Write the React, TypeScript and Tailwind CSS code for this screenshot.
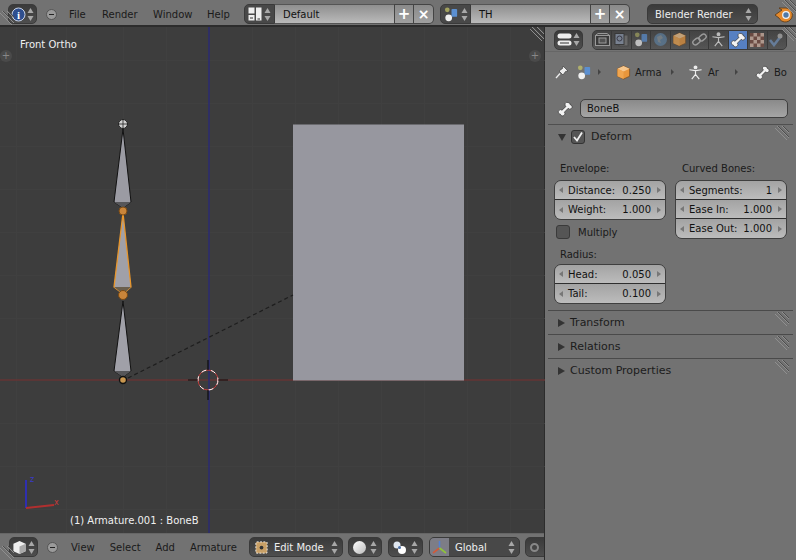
import type { ReactNode } from 'react';

const ui = "font-['DejaVu_Sans','Liberation_Sans',sans-serif]";

function Updown({ light = true }: { light?: boolean }) {
  const c = light ? '#a8a8a8' : '#999';
  return (
    <svg width="7" height="15" viewBox="0 0 7 15" className="shrink-0">
      <path d="M3.5 1 L6.5 6 H0.5 Z" fill={c} />
      <path d="M3.5 14 L6.5 9 H0.5 Z" fill={c} />
    </svg>
  );
}

function Corner({ className }: { className: string }) {
  return (
    <svg width="14" height="14" viewBox="0 0 14 14" className={className}>
      <path d="M2 0 L14 12 M7 0 L14 7 M0 2 L12 14" stroke="#8f8f8f" strokeWidth="1" fill="none" />
      <path d="M3 0 L14 11 M8 0 L14 6" stroke="#4d4d4d" strokeWidth="1" fill="none" />
    </svg>
  );
}

function DarkBtn({ children, className = '' }: { children: ReactNode; className?: string }) {
  return (
    <div className={`flex h-[20px] shrink-0 items-center rounded-[5px] border border-[#3a3a3a] bg-gradient-to-b from-[#3a3a3a] to-[#4e4e4e] ${className}`}>
      {children}
    </div>
  );
}

function InfoIcon() {
  return (
    <svg width="15" height="15" viewBox="0 0 15 15">
      <circle cx="7.5" cy="7.5" r="6.5" fill="#2f4f8f" stroke="#c9d4e8" strokeWidth="1" />
      <text x="7.5" y="11.5" textAnchor="middle" fontSize="11" fontWeight="700" fontFamily="Liberation Serif" fill="#ffffff">i</text>
    </svg>
  );
}

function Minus() {
  return (
    <div className="flex h-[11px] w-[11px] shrink-0 items-center justify-center rounded-full bg-[#9a9a9a] border border-[#555]">
      <div className="h-[1px] w-[5px] bg-[#222]" />
    </div>
  );
}

function LayoutIcon() {
  return (
    <svg width="14" height="14" viewBox="0 0 14 14">
      <rect x="0.5" y="0.5" width="6" height="6" fill="#eee" />
      <rect x="0.5" y="8" width="6" height="5.5" fill="#eee" />
      <rect x="8" y="0.5" width="5.5" height="13" fill="#eee" />
      <path d="M2 11 H5 M9.5 12 H12" stroke="#333" />
    </svg>
  );
}

function SceneIcon({ size = 16 }: { size?: number }) {
  return (
    <svg width={size} height={size} viewBox="0 0 16 16">
      <circle cx="3.5" cy="3" r="2.5" fill="#c9c96a" opacity="0.7" />
      <rect x="8" y="2" width="6" height="8.5" rx="1" fill="#5b8fd0" />
      <circle cx="5" cy="11.5" r="3.6" fill="#f0f0f0" />
    </svg>
  );
}

function BoneIcon({ size = 15, fill = '#f2f2f2' }: { size?: number; fill?: string }) {
  return (
    <svg width={size} height={size} viewBox="0 0 16 16">
      <path
        d="M11 1.5 a2.2 2.2 0 0 1 2.2 2.2 a2.2 2.2 0 0 1 1.2 3.8 a2.2 2.2 0 0 1 -3.2 -.2 L7.4 11.2 a2.2 2.2 0 0 1 -.4 3.2 a2.2 2.2 0 0 1 -3.6 -1.2 a2.2 2.2 0 0 1 -1.6 -3.6 a2.2 2.2 0 0 1 3.2 -.4 L9 5.4 a2.2 2.2 0 0 1 2 -3.9 Z"
        fill={fill}
        stroke="#333"
        strokeWidth="0.7"
      />
    </svg>
  );
}

function CubeIcon({ size = 15 }: { size?: number }) {
  return (
    <svg width={size} height={size} viewBox="0 0 16 16">
      <path d="M8 1 L14.5 4 V12 L8 15 L1.5 12 V4 Z" fill="#e8963c" stroke="#7a4a18" strokeWidth="0.7" />
      <path d="M8 1 L14.5 4 L8 7 L1.5 4 Z" fill="#f6c78e" />
      <path d="M8 7 V15 L1.5 12 V4 Z" fill="#f0a54f" />
    </svg>
  );
}

function ArmatureIcon({ size = 15 }: { size?: number }) {
  return (
    <svg width={size} height={size} viewBox="0 0 16 16" fill="none" stroke="#eee" strokeWidth="1.2">
      <circle cx="8" cy="2.5" r="1.5" fill="#eee" />
      <path d="M1.5 5 L8 6 L14.5 5 M8 6 V10 M8 10 L4 15 M8 10 L12 15" />
    </svg>
  );
}

function PropertyTabs() {
  const tabs: ReactNode[] = [
    <svg key="cam" width="15" height="13" viewBox="0 0 15 13"><rect x="0.5" y="2.5" width="14" height="10" fill="#333" stroke="#bbb" /><path d="M1 2 L3 0.5 H12 L14 2" stroke="#bbb" fill="none" /><rect x="4" y="5" width="7" height="5" fill="#555" stroke="#bbb" /></svg>,
    <svg key="layers" width="15" height="14" viewBox="0 0 15 14"><rect x="5" y="2" width="9" height="11" fill="#777" stroke="#444" /><rect x="1" y="0.5" width="9" height="11" fill="#8a98ad" stroke="#333" /><circle cx="5.5" cy="5.5" r="2.5" fill="none" stroke="#334" /></svg>,
    <SceneIcon key="scene" size={15} />,
    <svg key="world" width="15" height="15" viewBox="0 0 15 15"><circle cx="7.5" cy="7.5" r="6.5" fill="#5d7f9e" /><path d="M4 5 L8 3 L10 6 L7 8 L8 11 L5 10 Z" fill="#86929a" /></svg>,
    <CubeIcon key="cube" size={15} />,
    <svg key="link" width="15" height="15" viewBox="0 0 15 15" fill="none" stroke="#bbb" strokeWidth="1.4"><rect x="0.5" y="7" width="8" height="5" rx="2.5" transform="rotate(-40 4.5 9.5)" /><rect x="6.5" y="3" width="8" height="5" rx="2.5" transform="rotate(-40 10.5 5.5)" /></svg>,
    <ArmatureIcon key="arm" size={15} />,
    <BoneIcon key="bone" size={16} />,
    <svg key="tex" width="14" height="14" viewBox="0 0 14 14"><rect width="14" height="14" fill="#d8b8a8" /><path d="M0 0h3.5v3.5H0z M7 0h3.5v3.5H7z M3.5 3.5H7V7H3.5z M10.5 3.5H14V7h-3.5z M0 7h3.5v3.5H0z M7 7h3.5v3.5H7z M3.5 10.5H7V14H3.5z M10.5 10.5H14V14h-3.5z" fill="#7a4c40" /></svg>,
    <svg key="check" width="15" height="14" viewBox="0 0 15 14"><path d="M1 7 L5 12 L12 3" stroke="#6f8fb8" strokeWidth="2.6" fill="none" /><circle cx="11" cy="3" r="2.5" fill="#b0b0b0" /></svg>,
  ];
  return (
    <div className="flex h-[20px] w-[195px] overflow-hidden rounded-[5px] border border-[#3a3a3a] bg-[#4a4a4a]">
      {tabs.map((t, i) => (
        <div key={i} className={`flex h-full flex-1 items-center justify-center border-r border-[#393939] last:border-r-0 ${i === 7 ? 'bg-[#5680c2]' : 'bg-gradient-to-b from-[#444] to-[#565656]'}`}>
          <div className={`flex ${i === 7 ? '' : 'opacity-70'}`}>{t}</div>
        </div>
      ))}
    </div>
  );
}

function NumRow({ label, value, last }: { label: string; value: string; last?: boolean }) {
  return (
    <div className={`flex h-[19px] items-center bg-gradient-to-b from-[#a3a3a3] to-[#bcbcbc] px-[4px] text-[10px] text-[#111] ${last ? '' : 'border-b border-[#2e2e2e]'}`}>
      <span className="mr-[5px] h-0 w-0 border-y-[3px] border-r-[4px] border-y-transparent border-r-[#777]" />
      <span>{label}</span>
      <span className="ml-auto">{value}</span>
      <span className="ml-[6px] h-0 w-0 border-y-[3px] border-l-[4px] border-y-transparent border-l-[#777]" />
    </div>
  );
}

function NumBox({ rows, className = '' }: { rows: [string, string][]; className?: string }) {
  return (
    <div className={`overflow-hidden rounded-[7px] border border-[#3f3f3f] ${className}`}>
      {rows.map(([l, v], i) => <NumRow key={l} label={l} value={v} last={i === rows.length - 1} />)}
    </div>
  );
}

function PanelHeader({ title }: { title: string }) {
  return (
    <div className="relative flex h-[24px] items-center border-t border-t-[#4a4a4a] pl-[10px] pt-[1px] text-[11px] text-[#1c1c1c]">
      <span className="mr-[5px] h-0 w-0 border-y-[4px] border-l-[7px] border-y-transparent border-l-[#333]" />
      <span>{title}</span>
      <Corner className="absolute right-[4px] top-[1px]" />
    </div>
  );
}

function Viewport() {
  const vs = [16, 66, 123, 166, 252, 295, 338, 381, 424, 467, 510];
  const hs = [60, 103, 146, 189, 232, 275, 318, 423, 466, 509];
  return (
    <div className="relative min-h-0 flex-1 bg-[#3d3d3d]">
      <svg width="545" height="506" viewBox="0 27 545 506" className="block">
        {vs.map(x => <line key={x} x1={x + 0.5} y1="27" x2={x + 0.5} y2="533" stroke="#404040" />)}
        {hs.map(y => <line key={y} x1="0" y1={y + 0.5} x2="545" y2={y + 0.5} stroke="#404040" />)}
        <line x1="0" y1="380" x2="545" y2="380" stroke="#653535" strokeWidth="1.5" />
        <line x1="209" y1="27" x2="209" y2="533" stroke="#2b2b72" strokeWidth="1.5" />
        <rect x="293" y="124.5" width="171" height="256" fill="#97979f" />
        <line x1="128" y1="378" x2="293" y2="295" stroke="#1e1e1e" strokeWidth="1.2" strokeDasharray="4 3" />

        <path d="M123 129 L131 202 L123 208 L114 202 Z" fill="#9b9ba3" stroke="#111" strokeWidth="1" />
        <path d="M114 202 L131 202 L123 208 Z" fill="#565659" />
        <circle cx="123" cy="124" r="4.5" fill="#d0d0d0" stroke="#222" />
        <path d="M118.5 124 H127.5 M123 119.5 V128.5" stroke="#222" strokeWidth="0.8" />

        <path d="M123 213 L131 287 L123 294 L114 287 Z" fill="#a0a0a8" stroke="#e8962c" strokeWidth="1.3" />
        <path d="M114 287 L131 287 L123 294 Z" fill="#6a5f4e" />
        <circle cx="123" cy="211" r="4" fill="#c9853a" stroke="#7a4a14" />
        <circle cx="123" cy="295" r="4.5" fill="#c9853a" stroke="#7a4a14" />

        <path d="M123 301 L131 371 L123 377 L114 371 Z" fill="#a0a0a8" stroke="#111" strokeWidth="1" />
        <path d="M114 371 L131 371 L123 377 Z" fill="#565659" />
        <circle cx="123" cy="380" r="3.5" fill="#c9974f" stroke="#111" strokeWidth="1.4" />

        <circle cx="208" cy="380" r="10" fill="none" stroke="#c43a3a" strokeWidth="1" />
        <circle cx="208" cy="380" r="10" fill="none" stroke="#fff" strokeWidth="1" strokeDasharray="5 5" />
        <path d="M188 380 H198 M218 380 H228 M208 360 V370 M208 390 V400" stroke="#0c0c0c" strokeWidth="1.2" />

        <line x1="26" y1="508" x2="26" y2="480" stroke="#2f2fb0" strokeWidth="2" />
        <line x1="26" y1="508" x2="54" y2="505" stroke="#b02f2f" strokeWidth="2" />
        <text x="30" y="482" fontSize="8" fill="#3a3ac8" fontFamily="DejaVu Sans">z</text>
        <text x="54" y="505" fontSize="8" fill="#c83a3a" fontFamily="DejaVu Sans">x</text>
      </svg>
      <div className="absolute left-[20px] top-[10px] text-[10px] text-[#f0f0f0]">Front Ortho</div>
      <div className="absolute bottom-[5px] left-[70px] text-[10px] text-[#f0f0f0]">(1) Armature.001 : BoneB</div>
      <div className="absolute left-0 top-[23px] h-[12px] w-[12px] rounded-full bg-[#4a4a4a] text-center text-[10px] leading-[12px] text-[#888]">+</div>
      <div className="absolute right-[3px] top-[23px] h-[12px] w-[12px] rounded-full bg-[#4a4a4a] text-center text-[10px] leading-[12px] text-[#888]">+</div>
      <Corner className="absolute right-0 top-0" />
    </div>
  );
}

function FieldWithButtons({ icon, text, widthClass }: { icon: ReactNode; text: string; widthClass: string }) {
  return (
    <div className="flex h-[20px] shrink-0 items-center">
      <div className="flex h-full w-[31px] items-center justify-center gap-[2px] rounded-l-[5px] border border-[#3a3a3a] bg-[#484848]">
        {icon}
        <Updown />
      </div>
      <div className={`flex h-full items-center bg-gradient-to-b from-[#8f8f8f] to-[#bababa] pl-[8px] text-[10px] text-[#111] border-y border-[#555] ${widthClass}`}>{text}</div>
      <div className="flex h-full w-[20px] items-center justify-center border border-[#444] bg-gradient-to-b from-[#8a8a8a] to-[#a0a0a0] text-[15px] font-bold leading-none text-white">+</div>
      <div className="flex h-full w-[20px] items-center justify-center rounded-r-[5px] border-y border-r border-[#444] bg-gradient-to-b from-[#8a8a8a] to-[#a0a0a0] text-[14px] font-bold leading-none text-white">×</div>
    </div>
  );
}

export default function App() {
  return (
    <div className={`${ui} flex h-[560px] w-[796px] flex-col overflow-hidden whitespace-nowrap bg-[#727272]`}>
      {/* top info header */}
      <div className="relative flex h-[27px] shrink-0 items-center border-b-2 border-[#2c2c2c] pl-[8px] pt-[3px] text-[10px] text-[#1a1a1a]">
        <Corner className="absolute bottom-0 left-0" />
        <Corner className="absolute right-0 top-0" />
        <DarkBtn className="w-[29px] justify-center gap-[1px]"><InfoIcon /><Updown /></DarkBtn>
        <div className="ml-[9px]"><Minus /></div>
        <span className="ml-[12px] w-[19px]">File</span>
        <span className="ml-[14px] w-[36px]">Render</span>
        <span className="ml-[15px] w-[39px]">Window</span>
        <span className="ml-[15px] w-[24px]">Help</span>
        <div className="ml-[13px]"><FieldWithButtons icon={<LayoutIcon />} text="Default" widthClass="w-[119px]" /></div>
        <div className="ml-[6px]"><FieldWithButtons icon={<SceneIcon size={15} />} text="TH" widthClass="w-[119px]" /></div>
        <DarkBtn className="ml-[17px] w-[111px] justify-between pl-[7px] pr-[5px] text-[#eee]"><span>Blender Render</span><Updown /></DarkBtn>
        <svg width="20" height="18" viewBox="0 0 20 18" className="ml-[16px] shrink-0">
          <path d="M1 10 L8 5 L5 3 L12 3 A7 7 0 1 1 5 13 Z" fill="#e58a2c" stroke="#5a3612" strokeWidth="0.8" />
          <circle cx="12" cy="10" r="3.3" fill="#4f79a8" stroke="#f3f3f3" strokeWidth="1.2" />
        </svg>
      </div>

      <div className="flex min-h-0 flex-1">
        {/* 3D view */}
        <div className="flex w-[545px] shrink-0 flex-col border-r border-[#2c2c2c]">
          <Viewport />
          <div className="relative flex h-[27px] shrink-0 items-center overflow-hidden border-t border-[#666] pl-[9px] text-[10px] text-[#1a1a1a]">
            <Corner className="absolute bottom-0 left-0" />
            <DarkBtn className="w-[29px] justify-center gap-[1px]">
              <svg width="15" height="15" viewBox="0 0 16 16"><path d="M8 1 L14.5 4 V12 L8 15 L1.5 12 V4 Z" fill="#eee" /><path d="M8 7 V15 L14.5 12 V4 Z" fill="#aaa" /></svg>
              <Updown />
            </DarkBtn>
            <div className="ml-[9px]"><Minus /></div>
            <span className="ml-[13px] w-[25px]">View</span>
            <span className="ml-[15px] w-[32px]">Select</span>
            <span className="ml-[15px] w-[21px]">Add</span>
            <span className="ml-[15px] w-[47px]">Armature</span>
            <DarkBtn className="ml-[12px] w-[94px] gap-[5px] pl-[4px] pr-[4px] text-[#eee]">
              <svg width="15" height="15" viewBox="0 0 16 16"><rect x="2" y="2" width="12" height="12" rx="1" fill="#c9a066" stroke="#eee" strokeDasharray="2 1.5" /><circle cx="8" cy="8" r="2" fill="#333" /></svg>
              <span>Edit Mode</span>
              <span className="ml-auto"><Updown /></span>
            </DarkBtn>
            <DarkBtn className="ml-[5px] w-[34px] justify-between pl-[4px] pr-[4px]">
              <div className="h-[13px] w-[13px] rounded-full bg-gradient-to-br from-white to-[#bbb]" />
              <Updown />
            </DarkBtn>
            <DarkBtn className="ml-[6px] w-[35px] justify-between pl-[3px] pr-[4px]">
              <svg width="15" height="15" viewBox="0 0 15 15"><circle cx="5" cy="5" r="3.5" fill="#dfe6ef" /><circle cx="10" cy="10" r="4" fill="#fff" /><circle cx="7.5" cy="7.5" r="1.5" fill="#4a6fa8" /></svg>
              <Updown />
            </DarkBtn>
            <div className="ml-[6px] flex h-[20px] w-[91px] shrink-0 items-center rounded-[5px] border border-[#3a3a3a] bg-[#484848] text-[#eee]">
              <div className="flex h-full w-[19px] items-center justify-center rounded-l-[4px] bg-[#7d7d86]">
                <svg width="17" height="17" viewBox="0 0 17 17" fill="none" strokeWidth="1.6"><path d="M8.5 9 V2" stroke="#5580d0" /><path d="M8.5 9 L2 14" stroke="#d05a3a" /><path d="M8.5 9 L15 14" stroke="#8fc43a" /></svg>
              </div>
              <span className="ml-[6px]">Global</span>
              <span className="ml-auto mr-[4px]"><Updown /></span>
            </div>
            <DarkBtn className="ml-[5px] w-[30px] justify-start pl-[4px]">
              <div className="h-[9px] w-[9px] rounded-full border-2 border-[#888]" />
            </DarkBtn>
          </div>
        </div>

        {/* properties editor */}
        <div className="relative min-w-0 flex-1 overflow-hidden text-[10px] text-[#1a1a1a]">
          <Corner className="absolute right-0 top-0" />
          <div className="flex h-[25px] items-center border-b border-[#666] pl-[9px] pt-[1px]">
            <DarkBtn className="w-[29px] justify-center gap-[1px]">
              <svg width="15" height="13" viewBox="0 0 15 13"><rect x="0.5" y="0.5" width="14" height="5" rx="2.5" fill="#eee" /><rect x="0.5" y="7.5" width="14" height="5" rx="2.5" fill="#eee" /><path d="M3 10 H12" stroke="#333" /></svg>
              <Updown />
            </DarkBtn>
            <div className="ml-[9px]"><PropertyTabs /></div>
          </div>

          <div className="ml-[10px] mt-[10px] flex h-[20px] items-center">
            <svg width="14" height="14" viewBox="0 0 14 14"><path d="M8 1 L13 6 L10.5 6.5 L8 10 L4 6 L7.5 3.5 Z" fill="#eee" stroke="#333" strokeWidth="0.6" /><path d="M5 8.5 L1 13" stroke="#eee" strokeWidth="1.3" /></svg>
            <div className="ml-[8px]"><SceneIcon size={15} /></div>
            <span className="ml-[6px] h-0 w-0 border-y-[3px] border-l-[3px] border-y-transparent border-l-[#444]" />
            <div className="ml-[15px]"><CubeIcon size={15} /></div>
            <span className="ml-[4px] w-[28px]">Arma</span>
            <span className="ml-[8px] h-0 w-0 border-y-[3px] border-l-[3px] border-y-transparent border-l-[#444]" />
            <div className="ml-[14px]"><ArmatureIcon size={15} /></div>
            <span className="ml-[5px] w-[13px]">Ar</span>
            <span className="ml-[14px] h-0 w-0 border-y-[3px] border-l-[3px] border-y-transparent border-l-[#444]" />
            <div className="ml-[17px]"><BoneIcon size={15} /></div>
            <span className="ml-[4px]">Bo</span>
          </div>

          <div className="ml-[12px] mt-[17px] flex h-[19px] items-center gap-[7px] pr-[8px]">
            <BoneIcon size={16} />
            <div className="flex h-full flex-1 items-center rounded-[5px] border border-[#3f3f3f] bg-gradient-to-b from-[#8a8a8a] to-[#a5a5a5] pl-[6px] text-[#111]">BoneB</div>
          </div>

          <div className="relative mx-[3px] mt-[6px] flex h-[24px] items-center border-t border-[#4f4f4f] pl-[10px] pt-[1px] text-[11px] text-[#1c1c1c]">
            <span className="h-0 w-0 border-x-[4px] border-t-[7px] border-x-transparent border-t-[#333]" />
            <div className="ml-[5px] flex h-[14px] w-[14px] items-center justify-center rounded-[3px] border border-[#333] bg-[#555]">
              <svg width="12" height="12" viewBox="0 0 12 12"><path d="M2 6 L5 9.5 L10 1.5" stroke="#f0f0f0" strokeWidth="1.8" fill="none" /></svg>
            </div>
            <span className="ml-[6px]">Deform</span>
            <Corner className="absolute right-[4px] top-[1px]" />
          </div>

          <div className="mx-[9px] mt-[13px] grid grid-cols-[112px_112px] gap-x-[9px]">
            <div>
              <div className="h-[16px] pl-[6px] leading-[16px]">Envelope:</div>
              <NumBox className="mt-[3px]" rows={[['Distance:', '0.250'], ['Weight:', '1.000']]} />
              <div className="mt-[5px] flex h-[14px] items-center pl-[2px]">
                <div className="h-[14px] w-[14px] rounded-[3px] border border-[#3a3a3a] bg-[#555]" />
                <span className="ml-[8px]">Multiply</span>
              </div>
              <div className="mt-[8px] h-[16px] pl-[6px] leading-[16px]">Radius:</div>
              <NumBox className="mt-[1px]" rows={[['Head:', '0.050'], ['Tail:', '0.100']]} />
            </div>
            <div>
              <div className="h-[16px] pl-[7px] leading-[16px]">Curved Bones:</div>
              <NumBox className="mt-[3px]" rows={[['Segments:', '1'], ['Ease In:', '1.000'], ['Ease Out:', '1.000']]} />
            </div>
          </div>

          <div className="mx-[3px] mt-[6px]">
            <PanelHeader title="Transform" />
            <PanelHeader title="Relations" />
            <PanelHeader title="Custom Properties" />
          </div>
        </div>
      </div>
    </div>
  );
}
